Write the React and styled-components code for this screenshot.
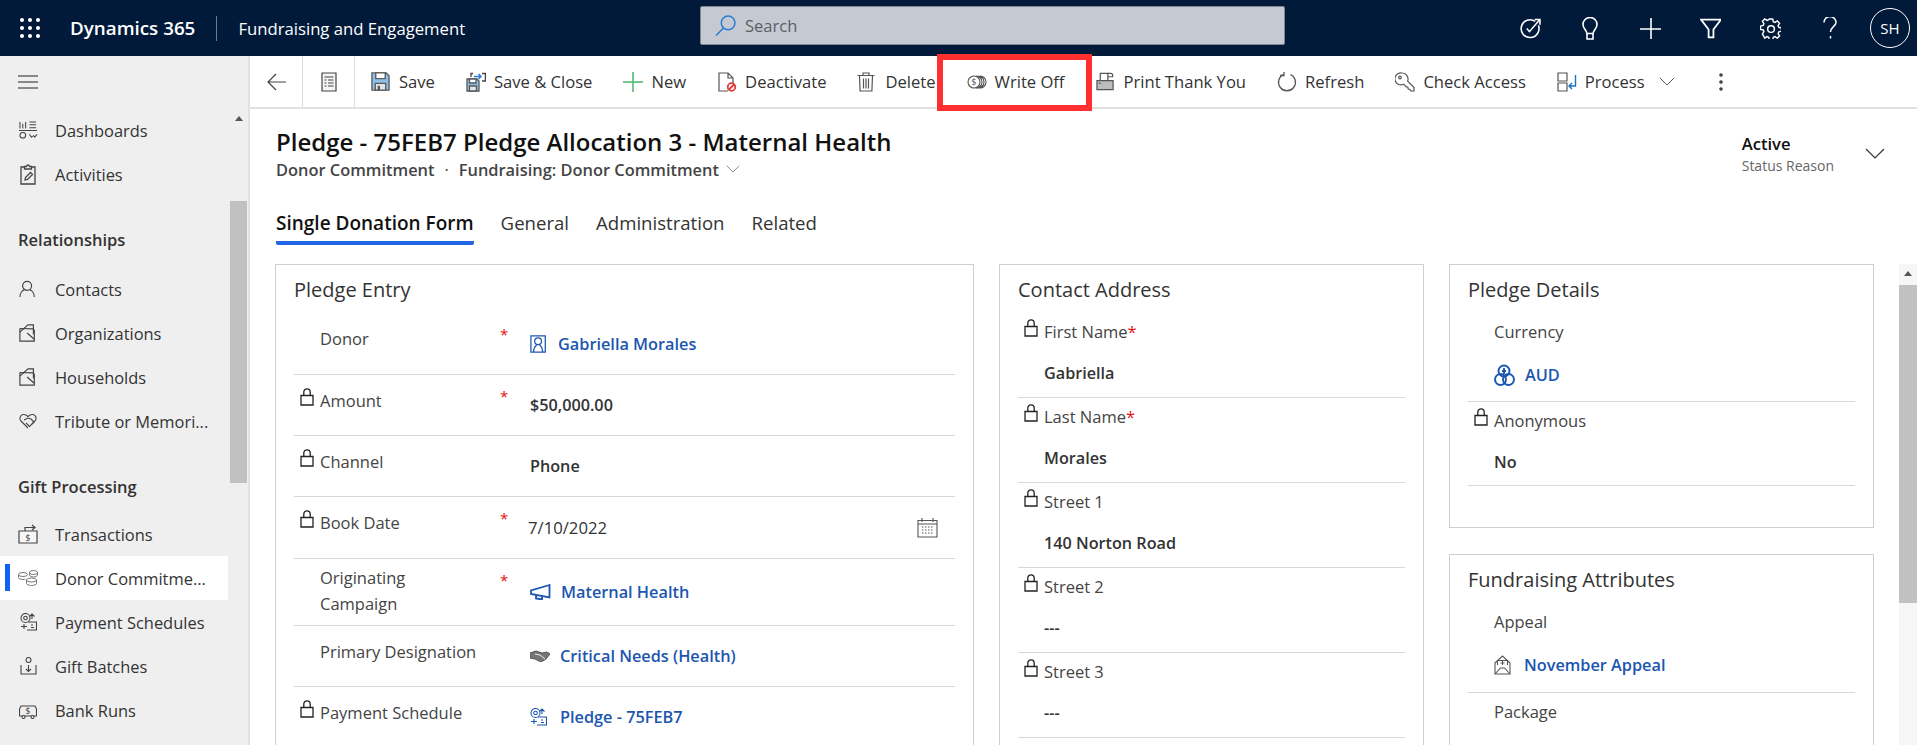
import React from 'react'
import styled, { createGlobalStyle } from 'styled-components'

const FONT = `"Open Sans", "Noto Sans", "Liberation Sans", sans-serif`

const GlobalStyle = createGlobalStyle`
    html, body {
        margin: 0;
        padding: 0;
        background: #fff;
        overflow: hidden;
    }
    * {
        box-sizing: border-box;
    }
`

const Page = styled.div`
    width: 1917px;
    height: 745px;
    overflow: hidden;
    display: flex;
    flex-direction: column;
    font-family: ${FONT};
    color: #333;
`

const Svg = styled.svg.attrs(p => ({
    viewBox: p.$box || '0 0 20 20',
    fill: 'none',
    stroke: 'currentColor',
    strokeWidth: p.$sw || 1.2,
}))`
    display: block;
    flex: none;
    width: ${p => p.$w || 20}px;
    height: ${p => p.$h || p.$w || 20}px;
    color: ${p => p.$color || 'inherit'};
`

/* top bar */
const TopBar = styled.header`
    flex: none;
    height: 56px;
    background: #011a3a;
    color: #fff;
    display: flex;
    align-items: center;
`
const Brand = styled.div`
    width: 700px;
    display: flex;
    align-items: center;
    padding-left: 20px;
`
const Waffle = styled.div`
    display: grid;
    grid-template-columns: repeat(3, 4px);
    gap: 4px;
    margin-right: 30px;
    span {
        width: 4px;
        height: 4px;
        border-radius: 50%;
        background: #fff;
    }
`
const ProductName = styled.div`
    font-size: 18.8px;
    font-weight: 600;
    padding-right: 21px;
    border-right: 1px solid #6d7a8c;
    line-height: 25px;
    white-space: nowrap;
`
const AppName = styled.div`
    font-size: 16.7px;
    margin-left: 21px;
    white-space: nowrap;
`
const SearchBox = styled.div`
    width: 585px;
    height: 39px;
    margin-top: -5px;
    background: #c5c9d1;
    border: 1px solid #7f8691;
    border-radius: 2px;
    display: flex;
    align-items: center;
    gap: 9px;
    padding-left: 14px;
    font-size: 16.5px;
    color: #5b5f66;
`
const TopIcons = styled.div`
    margin-left: auto;
    display: flex;
    align-items: center;
`
const TopIcon = styled.div`
    width: 60px;
    display: flex;
    justify-content: center;
`
const AvatarGap = styled.div`
    width: 10px;
`
const Avatar = styled.div`
    width: 40px;
    height: 40px;
    margin: 0 7px 0 0;
    border: 1px solid #fff;
    border-radius: 50%;
    display: flex;
    align-items: center;
    justify-content: center;
    font-size: 15px;
`

/* body */
const Body = styled.div`
    flex: 1;
    min-height: 0;
    display: flex;
`
const Sidebar = styled.nav`
    flex: none;
    width: 250px;
    background: #efefef;
    border-right: 2px solid #e1e1e1;
    display: flex;
    flex-direction: column;
`
const Burger = styled.div`
    flex: none;
    height: 52px;
    padding-left: 18px;
    display: flex;
    align-items: center;
    color: #222;
`
const SideScroll = styled.div`
    flex: 1;
    min-height: 0;
    display: flex;
    overflow: hidden;
`
const SideList = styled.div`
    width: 228px;
    flex: none;
`
const SideRail = styled.div`
    width: 17px;
    margin-left: 2px;
    flex: none;
    padding-top: 8px;
`
const RailArrow = styled.div`
    width: 0;
    height: 0;
    margin: 0 auto;
    border-left: 4px solid transparent;
    border-right: 4px solid transparent;
    border-bottom: 5px solid #555;
`
const RailThumb = styled.div`
    width: 100%;
    height: ${p => p.$h}px;
    margin-top: ${p => p.$top}px;
    background: #c1c1c1;
`
const SideSection = styled.div`
    height: ${p => p.$h}px;
    padding: 31px 0 0 18px;
    font-size: 16.5px;
    line-height: 26px;
    font-weight: 600;
    color: #333;
`
const SideRow = styled.div`
    position: relative;
    height: 44px;
    padding-left: 18px;
    display: flex;
    align-items: center;
    gap: 17px;
    font-size: 16.45px;
    color: #333;
    white-space: nowrap;
    background: ${p => (p.$active ? '#fff' : 'transparent')};
`
const SideIconBox = styled.span`
    width: 20px;
    flex: none;
    display: flex;
    justify-content: center;
    color: #444;
`
const ActiveMark = styled.span`
    position: absolute;
    left: 5px;
    top: 8px;
    width: 5px;
    height: 27px;
    background: #0f62f2;
`

const Main = styled.main`
    flex: 1;
    min-width: 0;
    display: flex;
    flex-direction: column;
`

/* command bar */
const CommandBar = styled.div`
    position: relative;
    flex: none;
    height: 53px;
    border-bottom: 2px solid #e1e1e1;
    display: flex;
    align-items: stretch;
`
const NavCell = styled.div`
    width: ${p => p.$w}px;
    border-right: 1px solid #dcdcdc;
    display: flex;
    align-items: center;
    justify-content: center;
    color: #444;
`
const Commands = styled.div`
    display: flex;
    align-items: center;
    gap: 31px;
    padding-left: 16px;
`
const Command = styled.div`
    display: flex;
    align-items: center;
    font-size: 16.6px;
    color: #333;
    white-space: nowrap;
`
const CommandIcon = styled.span`
    width: 28px;
    flex: none;
    color: #555;
`
const More = styled.div`
    margin-left: ${p => p.$shift || 0}px;
    color: #444;
`
const Highlight = styled.div`
    position: absolute;
    left: 687px;
    top: -2px;
    width: 155px;
    height: 57px;
    border: 6px solid #ff2f2f;
    pointer-events: none;
`

/* record header */
const RecordHead = styled.div`
    flex: none;
    height: 155px;
    padding: 18px 0 0 26px;
    display: flex;
    justify-content: space-between;
`
const Title = styled.h1`
    margin: 0;
    font-size: 24px;
    line-height: 30px;
    font-weight: 600;
    color: #111;
    white-space: nowrap;
`
const SubTitle = styled.div`
    display: flex;
    align-items: center;
    height: 24px;
    font-size: 16.4px;
    font-weight: 600;
    color: #444;
    white-space: nowrap;
    i {
        font-style: normal;
        margin: 0 10px;
        font-weight: 400;
    }
    svg {
        margin-left: 7px;
        color: #777;
    }
`
const Tabs = styled.div`
    display: flex;
    gap: 27px;
    margin-top: 27px;
`
const Tab = styled.div`
    height: 37px;
    line-height: 30px;
    font-size: ${p => (p.$active ? 19 : 18.6)}px;
    color: ${p => (p.$active ? '#111' : '#333')};
    font-weight: ${p => (p.$active ? 600 : 400)};
    border-bottom: 4px solid ${p => (p.$active ? '#2266e3' : 'transparent')};
    border-radius: 0 0 2px 2px;
    white-space: nowrap;
`
const Status = styled.div`
    display: flex;
    align-items: center;
    gap: 31px;
    height: 50px;
    margin: 2px 32px 0 0;
`
const StatusValue = styled.div`
    font-size: 16.6px;
    line-height: 24px;
    font-weight: 600;
    color: #111;
`
const StatusLabel = styled.div`
    font-size: 14px;
    line-height: 20px;
    color: #666;
`

/* form */
const FormArea = styled.div`
    flex: 1;
    min-height: 0;
    padding-left: 25px;
    display: flex;
    gap: 25px;
    overflow: hidden;
`
const Column = styled.div`
    flex: none;
    width: ${p => p.$w}px;
    display: flex;
    flex-direction: column;
    gap: 26px;
`
const Panel = styled.section`
    flex: ${p => (p.$fixed ? `0 0 ${p.$fixed}px` : '1 0 600px')};
    border: 1px solid #cfcfcf;
    padding: 12px 18px 0;
`
const PanelTitle = styled.h2`
    margin: 0 0 10px;
    font-size: 20px;
    line-height: 26px;
    font-weight: 400;
    color: #333;
`
const Row = styled.div`
    display: grid;
    grid-template-columns: 26px 180px 30px 1fr;
    height: ${p => p.$h}px;
    border-bottom: 1px solid #d8d8d8;
`
const LockSlot = styled.div`
    padding: 13px 0 0 6px;
    color: #222;
`
const Label = styled.div`
    padding-top: ${p => p.$top || 13}px;
    font-size: 16.5px;
    line-height: 26px;
    color: #444;
`
const Star = styled.span`
    color: #e01010;
    font-size: 15px;
    line-height: 26px;
    padding-top: 8px;
`
const ValueCell = styled.div`
    align-self: center;
    display: flex;
    align-items: center;
    justify-content: space-between;
    padding-right: 17px;
    margin-left: ${p => p.$left || 0}px;
`
const Plain = styled.span`
    font-size: 16.7px;
    color: #333;
`
const Strong = styled.span`
    font-size: 16.2px;
    font-weight: 600;
    color: #333;
`
const Lookup = styled.span`
    display: flex;
    align-items: center;
    height: 30px;
    font-size: 16.3px;
    font-weight: 600;
    color: #1c56b0;
    white-space: nowrap;
    svg {
        margin-right: ${p => p.$gap || 10}px;
    }
`
const Field = styled.div`
    height: ${p => p.$h || 85}px;
    border-bottom: ${p => (p.$open ? '0' : '1px solid #d8d8d8')};
`
const FieldLabel = styled.div`
    display: flex;
    padding-top: 6px;
    font-size: 16.5px;
    line-height: 26px;
    color: #444;
    em {
        font-style: normal;
        color: #e01010;
    }
`
const FieldLock = styled.div`
    width: 26px;
    padding: 0 0 0 6px;
    flex: none;
    color: #222;
`
const FieldValue = styled.div`
    margin: ${p => p.$gap || 15}px 0 0 26px;
    line-height: 26px;
    display: flex;
`
const Rail = styled.div`
    flex: none;
    width: 18px;
    background: #f6f6f6;
    padding-top: 7px;
`

/* icons */
const Lock = () => (
    <Svg $w={14} $h={18} $box="0 0 14 18" $sw={1.3}>
        <path d="M1 7.500h12V17H1z" />
        <path d="M3.800 7.500V4a3.200 3.200 0 0 1 6.400 0v3.500" />
    </Svg>
)

const icons = {
    save: (
        <Svg $w={19} $sw={1.4}>
            <path d="M1 1h15l3 3v15H1z" fill="#8dc1ea" stroke="#5a5a5a" />
            <path d="M5 1h10v6H5z" fill="#fff" stroke="#5a5a5a" />
            <path d="M4.500 12h11v7h-11z" fill="#e5e5e5" stroke="#5a5a5a" />
            <path d="M7 14.500h2.500V19H7z" fill="#5a5a5a" stroke="none" />
        </Svg>
    ),
    saveClose: (
        <Svg $w={20} $sw={1.3}>
            <path d="M1 7h10l2 2v10H1z" fill="#8dc1ea" stroke="#5a5a5a" />
            <path d="M3.500 7h6.500v4H3.500z" fill="#fff" stroke="#5a5a5a" />
            <path d="M3.500 14h7v5h-7z" fill="#e5e5e5" stroke="#5a5a5a" />
            <path d="M5 5V1.500h2M16 1.500h3.400V9H16" stroke="#444" />
            <path d="M8 4.500h7M12.500 2l2.500 2.500L12.500 7" stroke="#2c7cd3" strokeWidth="1.5" />
        </Svg>
    ),
    plus: (
        <Svg $w={20} $color="#4cb56f" $sw={1.5}>
            <path d="M0 10h20M10 0v20" />
        </Svg>
    ),
    deactivate: (
        <Svg $w={20} $color="#555" $sw={1.2}>
            <path d="M11 19H2V1h9l5 5v5M11 1v5h5" />
            <circle cx="14.500" cy="15" r="3.800" stroke="#e23a3a" strokeWidth="1.8" fill="#fff" />
            <path d="M12 17.500l5-5" stroke="#e23a3a" strokeWidth="1.8" />
        </Svg>
    ),
    trash: (
        <Svg $w={18} $h={20} $box="0 0 18 20" $sw={1.2}>
            <path d="M2.500 3.500l.6 15.500h11.800l.6-15.500M0.500 3.500h17M6 3.500V1h6v2.500" />
            <path d="M6.500 6.500v10M9 6.500v10M11.500 6.500v10" />
        </Svg>
    ),
    writeOff: (
        <Svg $w={20} $h={14} $box="0 0 20 14" $sw={1.1}>
            <circle cx="7" cy="7" r="6" fill="#fff" />
            <path d="M9 1a6 6 0 0 1 0 12M11 1a6 6 0 0 1 0 12M13 1a6 6 0 0 1 0 12" />
            <text x="7" y="10" textAnchor="middle" fontSize="8.500" fill="currentColor" stroke="none" fontFamily={FONT}>$</text>
        </Svg>
    ),
    print: (
        <Svg $w={19} $sw={1.3}>
            <path d="M4.500 9V1.500h8V9" fill="#fff" />
            <path d="M12.500 1.500h3a2 2 0 0 1 2 2v1.500h-5" />
            <path d="M1 9h17v9.500H1z" fill="#bdbdbd" />
            <path d="M3 12h2" />
        </Svg>
    ),
    refresh: (
        <Svg $w={20} $sw={1.3}>
            <path d="M6.500 2.500a8.500 8.500 0 1 0 7 0" />
            <path d="M7 0v3.500H3" />
        </Svg>
    ),
    key: (
        <Svg $w={20} $sw={1.2}>
            <path d="M7 1a6 6 0 0 1 5.600 8.200l6.400 6.400V19h-3.200l-.8-1.600-1.800-.4-.4-1.800-1.700-.5-2.400-2.500A6 6 0 1 1 7 1z" />
            <circle cx="5" cy="5.500" r="1.300" />
        </Svg>
    ),
    process: (
        <Svg $w={20} $sw={1.2}>
            <path d="M1 1h9v8H1zM1 11h9v8H1z" />
            <path d="M18.500 3v11H12M15 11l-3 3 3 3" stroke="#1c6fc2" strokeWidth="1.4" />
        </Svg>
    ),
    dashboard: (
        <Svg $w={19} $sw={1.1}>
            <path d="M1 1v7M4 3v5M7 1v7M11 1h7M11 4h7M11 7h7M0 10h19" />
            <circle cx="4" cy="15" r="3" />
            <path d="M11 14l2 3 1.500-1M15 15l1.500 2 2.500-3" />
        </Svg>
    ),
    clipboard: (
        <Svg $w={16} $h={21} $box="0 0 16 21" $sw={1.3}>
            <path d="M4.500 3H1v17h14V3h-3.500" />
            <path d="M4.500 5V2.500h2a1.500 1.500 0 0 1 3 0h2V5z" />
            <path d="M5 16l.5-2.500 5-5 2 2-5 5z" />
        </Svg>
    ),
    person: (
        <Svg $w={18} $sw={1.3}>
            <circle cx="9" cy="6.500" r="5" />
            <path d="M1 19c0-5 3-7.500 5-8M17 19c0-5-3-7.500-5-8" />
        </Svg>
    ),
    org: (
        <Svg $w={18} $sw={1.3}>
            <path d="M1 5v14h16V7l-1.500-1.500L1 5" />
            <path d="M1 9l9-8h6v10.500" />
            <path d="M9 10l8 7" />
        </Svg>
    ),
    tribute: (
        <Svg $w={18} $h={16} $box="0 0 18 16" $sw={1.1}>
            <path d="M9 15L2 8C0 6 1 2 4 1.500c2-.3 3.500.5 5 2 1.500-1.500 3-2.300 5-2 3 .5 4 4 2 6.500l-3 3" />
            <path d="M5 7l4-2 3 1 3 3-4.500 4.500L7 10" />
        </Svg>
    ),
    transactions: (
        <Svg $w={20} $h={20} $sw={1.2}>
            <path d="M1 7h18v12H1z" fill="#f7f7f7" />
            <path d="M7 7V3.500h10M14 1l3 2.500L14 6" />
            <text x="10" y="16.500" textAnchor="middle" fontSize="8.500" fill="currentColor" stroke="none" fontFamily={FONT}>$</text>
        </Svg>
    ),
    coins: (
        <Svg $w={20} $h={16} $box="0 0 20 16" $color="#777" $sw={1}>
            <ellipse cx="5" cy="4.500" rx="4.500" ry="2" />
            <path d="M.5 4.500v3c0 1 2 2 4.500 2 1 0 2-.2 2.500-.5" />
            <ellipse cx="15.500" cy="2.500" rx="4" ry="2" />
            <path d="M11.500 2.500v2.500c0 1 2 2 4 2s4-1 4-2V2.500" />
            <ellipse cx="13.500" cy="10" rx="5" ry="2" />
            <path d="M8.500 10v3.500c0 1 2.500 2 5 2s5-1 5-2V10" />
        </Svg>
    ),
    schedule: (
        <Svg $w={17} $h={18} $box="0 0 17 18" $sw={1.1}>
            <circle cx="5.500" cy="5" r="4.500" />
            <circle cx="5.500" cy="5" r="1.800" />
            <path d="M12 1v5M9.500 3.500l2.500-2.500 2.500 2.500M8 9h8.500v8H7M1 13.500h6M4 11v5" />
            <path d="M11 12h2M11 14.500h3" />
        </Svg>
    ),
    batches: (
        <Svg $w={17} $h={18} $box="0 0 17 18" $sw={1.1}>
            <circle cx="8.500" cy="3" r="2.500" />
            <path d="M1 8v9h15V8M8.500 8v6M6 12l2.500 2.500L11 12" />
        </Svg>
    ),
    bank: (
        <Svg $w={18} $h={17} $box="0 0 18 17" $sw={1.1}>
            <path d="M2 4h14l1.500 3v7h-17V7z" />
            <text x="9" y="12" textAnchor="middle" fontSize="8.500" fill="currentColor" stroke="none" fontFamily={FONT}>$</text>
            <circle cx="4.500" cy="15" r="1.500" fill="#efefef" />
            <circle cx="13.500" cy="15" r="1.500" fill="#efefef" />
        </Svg>
    ),
    donor: (
        <Svg $w={18} $color="#1c56b0" $sw={1.4}>
            <path d="M1 1h16v18H1z" />
            <circle cx="9" cy="7" r="3.800" />
            <path d="M4 19c0-4.500 2-7 3.500-8M14 19c0-4.500-2-7-3.500-8" />
        </Svg>
    ),
    campaign: (
        <Svg $w={21} $h={16} $box="0 0 21 16" $color="#1c56b0" $sw={1.8}>
            <path d="M19.500 1L1 6.500V10l18.500 3.500zM6 11.500v3l6 1V13" />
        </Svg>
    ),
    designation: (
        <Svg $w={20} $h={12} $box="0 0 20 12" $color="#555" $sw={1}>
            <path d="M0 3l6-2 6 2 5-1 3 2-4 5-5 3-6-3-5-1z" fill="#777" />
            <path d="M5 4l5 1 5 4" stroke="#eee" />
        </Svg>
    ),
    currency: (
        <Svg $w={21} $h={22} $box="0 0 21 22" $color="#1c56b0" $sw={1.9}>
            <circle cx="10" cy="7" r="5.500" />
            <circle cx="6.500" cy="15.500" r="5.500" />
            <circle cx="14.500" cy="15.500" r="5.500" />
            <path d="M10 4v6M8 7h4" />
        </Svg>
    ),
    appeal: (
        <Svg $w={17} $h={20} $box="0 0 17 20" $color="#555" $sw={1.1}>
            <path d="M1 8l7.500-7L16 8v11H1z" />
            <path d="M3.500 10V5.500h10V10M1 19l5.500-6h4l5.500 6" />
            <path d="M8.500 6v4M6.500 8h4" />
        </Svg>
    ),
}

const sideTop = [
    { icon: 'dashboard', text: 'Dashboards' },
    { icon: 'clipboard', text: 'Activities' },
]
const sideRelationships = [
    { icon: 'person', text: 'Contacts' },
    { icon: 'org', text: 'Organizations' },
    { icon: 'org', text: 'Households' },
    { icon: 'tribute', text: 'Tribute or Memori...' },
]
const sideGifts = [
    { icon: 'transactions', text: 'Transactions' },
    { icon: 'coins', text: 'Donor Commitme...', active: true },
    { icon: 'schedule', text: 'Payment Schedules' },
    { icon: 'batches', text: 'Gift Batches' },
    { icon: 'bank', text: 'Bank Runs' },
]
const commands = [
    { icon: 'save', text: 'Save' },
    { icon: 'saveClose', text: 'Save & Close' },
    { icon: 'plus', text: 'New' },
    { icon: 'deactivate', text: 'Deactivate' },
    { icon: 'trash', text: 'Delete' },
    { icon: 'writeOff', text: 'Write Off' },
    { icon: 'print', text: 'Print Thank You' },
    { icon: 'refresh', text: 'Refresh' },
    { icon: 'key', text: 'Check Access' },
    { icon: 'process', text: 'Process' },
]
const addressFields = [
    { label: 'First Name', value: 'Gabriella', required: true },
    { label: 'Last Name', value: 'Morales', required: true },
    { label: 'Street 1', value: '140 Norton Road' },
    { label: 'Street 2', value: '---' },
    { label: 'Street 3', value: '---' },
]

const SideItem = ({ item }) => (
    <SideRow $active={item.active}>
        {item.active && <ActiveMark />}
        <SideIconBox>{icons[item.icon]}</SideIconBox>
        {item.text}
    </SideRow>
)

const PledgeRow = ({ label, locked, required, h, children, left, labelLines }) => (
    <Row $h={h}>
        <LockSlot>{locked && <Lock />}</LockSlot>
        <Label $top={labelLines ? 6 : 13}>{label}</Label>
        {required ? <Star>*</Star> : <span />}
        <ValueCell $left={left}>{children}</ValueCell>
    </Row>
)

const Chevron = ({ w = 14, color }) => (
    <Svg $w={w} $h={w * 0.6} $box="0 0 20 12" $sw={1.2} $color={color}>
        <path d="M1 1l9 9 9-9" />
    </Svg>
)

const App = () => {
    return (
        <Page>
            <GlobalStyle />
            <TopBar>
                <Brand>
                    <Waffle>
                        {Array.from({ length: 9 }, (_, i) => <span key={i} />)}
                    </Waffle>
                    <ProductName>Dynamics 365</ProductName>
                    <AppName>Fundraising and Engagement</AppName>
                </Brand>
                <SearchBox>
                    <Svg $w={21} $color="#2b7cd3" $sw={1.4}>
                        <circle cx="12.500" cy="7.500" r="6.500" />
                        <path d="M8 12.500L1 19.500" />
                    </Svg>
                    Search
                </SearchBox>
                <TopIcons>
                    <TopIcon>
                        <Svg $w={21} $sw={1.5}>
                            <path d="M14.500 3.200A8.500 8.500 0 1 0 17.500 7" />
                            <path d="M6.500 10l2.500 3L18.500 2M14 1.500h5v5" />
                        </Svg>
                    </TopIcon>
                    <TopIcon>
                        <Svg $w={16} $h={23} $box="0 0 16 23" $sw={1.6}>
                            <path d="M5 16.500C4.500 13 1 11.500 1 7.500a7 7 0 0 1 14 0c0 4-3.500 5.500-4 9z" />
                            <path d="M5 16.500V22h6v-5.500" />
                        </Svg>
                    </TopIcon>
                    <TopIcon>
                        <Svg $w={21} $sw={1.5}>
                            <path d="M0 10.500h21M10.500 0v21" />
                        </Svg>
                    </TopIcon>
                    <TopIcon>
                        <Svg $w={21} $sw={1.7}>
                            <path d="M1 1.500h19L12.800 11v7.500H8.200V11z" />
                        </Svg>
                    </TopIcon>
                    <TopIcon>
                        <Svg $w={21} $sw={1.4}>
                            <circle cx="10.500" cy="10.500" r="3.200" />
                            <path d="M8.800 1h3.400l.6 2.700 1.700.7 2.300-1.500 2.300 2.400-1.500 2.300.7 1.700 2.700.6v3.400l-2.700.6-.7 1.700 1.500 2.300-2.300 2.300-2.300-1.500-1.700.7-.6 2.700H8.800l-.6-2.700-1.700-.7-2.300 1.500L1.900 16l1.500-2.300-.7-1.700L0 11.400V8l2.700-.6.7-1.700L1.900 3.300l2.300-2.400 2.300 1.500 1.700-.7z" transform="translate(0.500 0) scale(0.95)" />
                        </Svg>
                    </TopIcon>
                    <TopIcon>
                        <Svg $w={14} $h={23} $box="0 0 14 23" $sw={1.5}>
                            <path d="M1 5.500a6 6 0 0 1 12 0c0 3.500-5.500 4.500-5.500 9.500" />
                            <path d="M7.500 19v2.500" />
                        </Svg>
                    </TopIcon>
                    <AvatarGap />
                    <Avatar>SH</Avatar>
                </TopIcons>
            </TopBar>
            <Body>
                <Sidebar>
                    <Burger>
                        <Svg $w={20} $h={14} $box="0 0 20 14" $sw={1.2}>
                            <path d="M0 1h20M0 7h20M0 13h20" />
                        </Svg>
                    </Burger>
                    <SideScroll>
                        <SideList>
                            {sideTop.map(item => <SideItem key={item.text} item={item} />)}
                            <SideSection $h={71}>Relationships</SideSection>
                            {sideRelationships.map(item => <SideItem key={item.text} item={item} />)}
                            <SideSection $h={69}>Gift Processing</SideSection>
                            {sideGifts.map(item => <SideItem key={item.text} item={item} />)}
                        </SideList>
                        <SideRail>
                            <RailArrow />
                            <RailThumb $top={80} $h={282} />
                        </SideRail>
                    </SideScroll>
                </Sidebar>
                <Main>
                    <CommandBar>
                        <NavCell $w={53}>
                            <Svg $w={19} $h={18} $box="0 0 19 18" $sw={1.2}>
                                <path d="M19 9H1M9 1L1 9l8 8" />
                            </Svg>
                        </NavCell>
                        <NavCell $w={52}>
                            <Svg $w={16} $h={20} $box="0 0 16 20" $sw={1.2}>
                                <path d="M1 1h14v18H1z" fill="#f4f4f4" />
                                <path d="M3.500 5h9M3.500 8h2M7 8h5.500M3.500 11h2M7 11h5.500M3.500 14h2M7 14h5.500" />
                            </Svg>
                        </NavCell>
                        <Commands>
                            {commands.map(c => (
                                <Command key={c.text}>
                                    <CommandIcon>{icons[c.icon]}</CommandIcon>
                                    {c.text}
                                </Command>
                            ))}
                            <More $shift={-17}><Chevron w={16} color="#555" /></More>
                            <More $shift={13}>
                                <Svg $w={4} $h={20} $box="0 0 4 20" $sw={0}>
                                    <circle cx="2" cy="3" r="1.200" fill="currentColor" />
                                    <circle cx="2" cy="10" r="1.200" fill="currentColor" />
                                    <circle cx="2" cy="17" r="1.200" fill="currentColor" />
                                </Svg>
                            </More>
                        </Commands>
                        <Highlight />
                    </CommandBar>
                    <RecordHead>
                        <div>
                            <Title>Pledge - 75FEB7 Pledge Allocation 3 - Maternal Health</Title>
                            <SubTitle>
                                Donor Commitment<i>·</i>Fundraising: Donor Commitment
                                <Chevron w={14} />
                            </SubTitle>
                            <Tabs>
                                <Tab $active>Single Donation Form</Tab>
                                <Tab>General</Tab>
                                <Tab>Administration</Tab>
                                <Tab>Related</Tab>
                            </Tabs>
                        </div>
                        <Status>
                            <div>
                                <StatusValue>Active</StatusValue>
                                <StatusLabel>Status Reason</StatusLabel>
                            </div>
                            <Chevron w={20} color="#333" />
                        </Status>
                    </RecordHead>
                    <FormArea>
                        <Column $w={699}>
                            <Panel>
                                <PanelTitle>Pledge Entry</PanelTitle>
                                <PledgeRow label="Donor" required h={62}>
                                    <Lookup>{icons.donor}Gabriella Morales</Lookup>
                                </PledgeRow>
                                <PledgeRow label="Amount" locked required h={61}>
                                    <Strong>$50,000.00</Strong>
                                </PledgeRow>
                                <PledgeRow label="Channel" locked h={61}>
                                    <Strong>Phone</Strong>
                                </PledgeRow>
                                <PledgeRow label="Book Date" locked required h={62} left={-2}>
                                    <Plain>7/10/2022</Plain>
                                    <Svg $w={21} $h={20} $box="0 0 21 20" $color="#555" $sw={1.1}>
                                        <path d="M1 2.500h19V19H1zM1 6h19M5 0v4M16 0v4" />
                                        <path d="M5 9h11M5 12h11M5 15h11" strokeDasharray="1.500 1.500" />
                                    </Svg>
                                </PledgeRow>
                                <PledgeRow label={<>Originating<br />Campaign</>} required h={67} labelLines>
                                    <Lookup>{icons.campaign}Maternal Health</Lookup>
                                </PledgeRow>
                                <PledgeRow label="Primary Designation" h={61}>
                                    <Lookup>{icons.designation}Critical Needs (Health)</Lookup>
                                </PledgeRow>
                                <PledgeRow label="Payment Schedule" locked h={61}>
                                    <Lookup $gap={13}>{icons.schedule}Pledge - 75FEB7</Lookup>
                                </PledgeRow>
                            </Panel>
                        </Column>
                        <Column $w={425}>
                            <Panel>
                                <PanelTitle>Contact Address</PanelTitle>
                                {addressFields.map(f => (
                                    <Field key={f.label}>
                                        <FieldLabel>
                                            <FieldLock><Lock /></FieldLock>
                                            {f.label}{f.required && <em>*</em>}
                                        </FieldLabel>
                                        <FieldValue><Strong>{f.value}</Strong></FieldValue>
                                    </Field>
                                ))}
                            </Panel>
                        </Column>
                        <Column $w={425}>
                            <Panel $fixed={264}>
                                <PanelTitle>Pledge Details</PanelTitle>
                                <Field $h={89}>
                                    <FieldLabel><FieldLock />Currency</FieldLabel>
                                    <FieldValue><Lookup>{icons.currency}AUD</Lookup></FieldValue>
                                </Field>
                                <Field $h={84}>
                                    <FieldLabel>
                                        <FieldLock><Lock /></FieldLock>
                                        Anonymous
                                    </FieldLabel>
                                    <FieldValue><Strong>No</Strong></FieldValue>
                                </Field>
                            </Panel>
                            <Panel>
                                <PanelTitle>Fundraising Attributes</PanelTitle>
                                <Field $h={90}>
                                    <FieldLabel><FieldLock />Appeal</FieldLabel>
                                    <FieldValue><Lookup $gap={13}>{icons.appeal}November Appeal</Lookup></FieldValue>
                                </Field>
                                <Field $open>
                                    <FieldLabel><FieldLock />Package</FieldLabel>
                                </Field>
                            </Panel>
                        </Column>
                        <Rail>
                            <RailArrow />
                            <RailThumb $top={9} $h={318} />
                        </Rail>
                    </FormArea>
                </Main>
            </Body>
        </Page>
    )
}

export default App
